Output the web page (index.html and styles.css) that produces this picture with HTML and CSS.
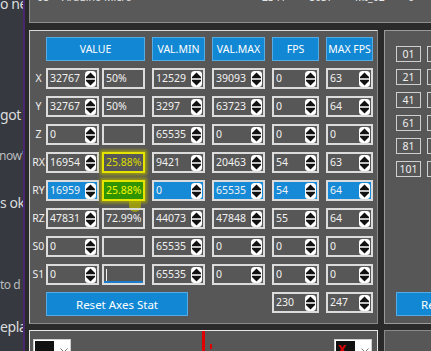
FILE: index.html
```html
<!DOCTYPE html>
<html>
<head>
<meta charset="utf-8">
<link rel="stylesheet" href="styles.css">
</head>
<body>
<svg class="defs" width="0" height="0">
  <symbol id="ud" viewBox="0 0 11 16">
    <rect x="0" y="0" width="11" height="16" rx="3.5" fill="#ffffff"/>
    <path d="M5.5 1.5 L10 6 V7.3 H1 V6 Z" fill="#111"/>
    <path d="M1 8.7 H10 V10 L5.5 14.5 L1 10 Z" fill="#111"/>
  </symbol>
</svg>
<div class="screen">
  <aside class="chat">
    <p class="m1">o ne</p>
    <p class="m2">got</p>
    <p class="m3 dim">now'</p>
    <p class="m4">s ok</p>
    <p class="m5 dim">to d</p>
    <p class="m6">epla</p>
  </aside>
  <div class="divider"></div>
  <div class="app">
    <div class="devbar">
      <span>08</span><span>Arduino Micro</span><span>2341</span><span>8037</span><span>MI_02</span><span>0</span>
    </div>
    <div class="mid">
      <section class="axes">
        <div class="row head">
          <span class="lbl"></span>
          <div class="cells">
            <div class="hdr">VALUE</div><div class="hdr">VAL.MIN</div><div class="hdr">VAL.MAX</div><div class="hdr">FPS</div><div class="hdr">MAX FPS</div>
          </div>
        </div>
        <div class="row">
          <span class="lbl">X</span>
          <div class="cells">
            <div class="pair"><div class="spin"><span>32767</span><svg class="ud"><use href="#ud"/></svg></div><div class="pct">50%</div></div>
            <div class="spin"><span>12529</span><svg class="ud"><use href="#ud"/></svg></div>
            <div class="spin"><span>39093</span><svg class="ud"><use href="#ud"/></svg></div>
            <div class="spin"><span>0</span><svg class="ud"><use href="#ud"/></svg></div>
            <div class="spin"><span>63</span><svg class="ud"><use href="#ud"/></svg></div>
          </div>
        </div>
        <div class="row">
          <span class="lbl">Y</span>
          <div class="cells">
            <div class="pair"><div class="spin"><span>32767</span><svg class="ud"><use href="#ud"/></svg></div><div class="pct">50%</div></div>
            <div class="spin"><span>3297</span><svg class="ud"><use href="#ud"/></svg></div>
            <div class="spin"><span>63723</span><svg class="ud"><use href="#ud"/></svg></div>
            <div class="spin"><span>0</span><svg class="ud"><use href="#ud"/></svg></div>
            <div class="spin"><span>64</span><svg class="ud"><use href="#ud"/></svg></div>
          </div>
        </div>
        <div class="row">
          <span class="lbl">Z</span>
          <div class="cells">
            <div class="pair"><div class="spin"><span>0</span><svg class="ud"><use href="#ud"/></svg></div><div class="pct"></div></div>
            <div class="spin"><span>65535</span><svg class="ud"><use href="#ud"/></svg></div>
            <div class="spin"><span>0</span><svg class="ud"><use href="#ud"/></svg></div>
            <div class="spin"><span>0</span><svg class="ud"><use href="#ud"/></svg></div>
            <div class="spin"><span>0</span><svg class="ud"><use href="#ud"/></svg></div>
          </div>
        </div>
        <div class="row">
          <span class="lbl">RX</span>
          <div class="cells">
            <div class="pair"><div class="spin"><span>16954</span><svg class="ud"><use href="#ud"/></svg></div><div class="pct warn">25.88%</div></div>
            <div class="spin"><span>9421</span><svg class="ud"><use href="#ud"/></svg></div>
            <div class="spin"><span>20463</span><svg class="ud"><use href="#ud"/></svg></div>
            <div class="spin"><span>54</span><svg class="ud"><use href="#ud"/></svg></div>
            <div class="spin"><span>63</span><svg class="ud"><use href="#ud"/></svg></div>
          </div>
        </div>
        <div class="row">
          <span class="lbl">RY</span>
          <div class="cells">
            <div class="pair"><div class="spin sel"><span>16959</span><svg class="ud"><use href="#ud"/></svg></div><div class="pct warn active">25.88%</div></div>
            <div class="spin sel"><span>0</span><svg class="ud"><use href="#ud"/></svg></div>
            <div class="spin sel"><span>65535</span><svg class="ud"><use href="#ud"/></svg></div>
            <div class="spin sel"><span>54</span><svg class="ud"><use href="#ud"/></svg></div>
            <div class="spin sel"><span>64</span><svg class="ud"><use href="#ud"/></svg></div>
          </div>
        </div>
        <div class="row">
          <span class="lbl">RZ</span>
          <div class="cells">
            <div class="pair"><div class="spin"><span>47831</span><svg class="ud"><use href="#ud"/></svg></div><div class="pct">72.99%</div></div>
            <div class="spin"><span>44073</span><svg class="ud"><use href="#ud"/></svg></div>
            <div class="spin"><span>47848</span><svg class="ud"><use href="#ud"/></svg></div>
            <div class="spin"><span>55</span><svg class="ud"><use href="#ud"/></svg></div>
            <div class="spin"><span>64</span><svg class="ud"><use href="#ud"/></svg></div>
          </div>
        </div>
        <div class="row">
          <span class="lbl">S0</span>
          <div class="cells">
            <div class="pair"><div class="spin"><span>0</span><svg class="ud"><use href="#ud"/></svg></div><div class="pct"></div></div>
            <div class="spin"><span>65535</span><svg class="ud"><use href="#ud"/></svg></div>
            <div class="spin"><span>0</span><svg class="ud"><use href="#ud"/></svg></div>
            <div class="spin"><span>0</span><svg class="ud"><use href="#ud"/></svg></div>
            <div class="spin"><span>0</span><svg class="ud"><use href="#ud"/></svg></div>
          </div>
        </div>
        <div class="row">
          <span class="lbl">S1</span>
          <div class="cells">
            <div class="pair"><div class="spin"><span>0</span><svg class="ud"><use href="#ud"/></svg></div><div class="pct focus"><i class="caret"></i></div></div>
            <div class="spin"><span>65535</span><svg class="ud"><use href="#ud"/></svg></div>
            <div class="spin"><span>0</span><svg class="ud"><use href="#ud"/></svg></div>
            <div class="spin"><span>0</span><svg class="ud"><use href="#ud"/></svg></div>
            <div class="spin"><span>0</span><svg class="ud"><use href="#ud"/></svg></div>
          </div>
        </div>
        <div class="row foot">
          <span class="lbl"></span>
          <div class="cells">
            <button class="btn reset">Reset Axes Stat</button>
            <div class="spin fps-total"><span>230</span><svg class="ud"><use href="#ud"/></svg></div>
            <div class="spin max-total"><span>247</span><svg class="ud"><use href="#ud"/></svg></div>
          </div>
        </div>
      </section>
      <section class="ports">
        <div class="pgrid">
          <div class="port">01</div><div class="port">02</div><div class="port">03</div>
          <div class="port">21</div><div class="port">22</div><div class="port">23</div>
          <div class="port">41</div><div class="port">42</div><div class="port">43</div>
          <div class="port">61</div><div class="port">62</div><div class="port">63</div>
          <div class="port">81</div><div class="port">82</div><div class="port">83</div>
          <div class="port">101</div><div class="port">102</div><div class="port">103</div>
        </div>
        <button class="btn reset rbtn">Reset Buttons Stat</button>
      </section>
    </div>
    <div class="bottom">
      <section class="graph">
        <div class="combo">
          <span class="swatch"><svg width="19" height="18" viewBox="0 0 19 18"><path d="M2 10.5 H17" stroke="#e8e800" stroke-width="1" stroke-dasharray="3 2"/></svg></span>
          <svg class="chev" width="8" height="5" viewBox="0 0 8 5"><path d="M0.5 0.5 L4 4 L7.5 0.5" fill="none" stroke="#777" stroke-width="1"/></svg>
        </div>
        <div class="combo">
          <span class="swatch"><b class="xmark">X</b></span>
          <svg class="chev" width="8" height="5" viewBox="0 0 8 5"><path d="M0.5 0.5 L4 4 L7.5 0.5" fill="none" stroke="#777" stroke-width="1"/></svg>
        </div>
        <i class="marker"></i>
        <i class="tick"></i>
      </section>
      <section class="graph2"></section>
    </div>
  </div>
</div>
</body>
</html>
```
FILE: styles.css
```css
* { box-sizing: border-box; margin: 0; padding: 0; }
html, body { width: 431px; height: 351px; overflow: hidden; background: #2a2a2a; }
body { font-family: "Noto Sans", "Open Sans", sans-serif; font-size: 10.5px; color: #f2f2f2; }
.defs { position: absolute; width: 0; height: 0; }

.screen { display: flex; height: 351px; overflow: hidden; }

.chat { width: 23px; flex: none; background: #36393f; overflow: hidden; white-space: nowrap;
  font-size: 14px; line-height: 20px; color: #dcddde; letter-spacing: -0.4px; }
.chat p { height: 20px; }
.chat .dim { font-size: 12px; color: #b9bbbe; letter-spacing: -0.5px; }
.m1 { margin-top: -6px; }
.m2 { margin-top: 91px; }
.m3 { margin-top: 21px; margin-left: -1px; }
.m4 { margin-top: 27px; }
.m5 { margin-top: 62px; }
.m6 { margin-top: 22px; }

.divider { width: 2px; flex: none; background: #4a2670; }

.app { flex: none; width: 406px; padding-left: 4px; display: flex; flex-direction: column; }

.devbar { width: 420px; height: 34px; margin-top: -11px; flex: none; background: #595959;
  border: 1px solid #8e8e8e; padding: 1px 0 0 7px; display: grid;
  grid-template-columns: 25px 200px 47px 46px 53px 20px; line-height: 13px; font-size: 10.5px; color: #e6e6e6; }

.mid { display: flex; gap: 6px; margin-top: 7px; height: 294px; flex: none; }

.axes { width: 349px; flex: none; background: #575757; border: 1px solid #8a8a8a;
  border-top-color: #d8d8d8; border-left-color: #c8c8c8; padding-top: 6px;
  display: flex; flex-direction: column; gap: 7px; }

.row { display: flex; height: 21px; align-items: stretch; }
.row.head, .row.foot { height: 24px; }
.lbl { width: 16px; flex: none; text-align: center; line-height: 21px; font-size: 10.5px; color: #efefef; padding-left: 1px; }
.cells { display: grid; grid-template-columns: 99px 53px 53px 47px 47px; column-gap: 7px; align-items: start; }
.pair { display: flex; gap: 3px; }
.pair .spin { width: 53px; }

.spin { height: 21px; display: flex; align-items: center; justify-content: space-between;
  border: 2px solid #dcdcdc; padding: 0 1px 0 1px; background: #575757; line-height: 17px; }
.spin span { padding-left: 1px; }
.spin.sel { background: #168ad6; }
.ud { width: 11px; height: 16px; flex: none; }

.pct { width: 43px; height: 21px; border: 2px solid #dcdcdc; padding-left: 2px; line-height: 17px; position: relative; }
.pct.warn { border-color: #e4e400; color: #dcdc00; box-shadow: 0 0 3px 2px rgba(175, 175, 0, 0.75); }
.pct.active { background: #2f9400; color: #f4f400; }
.pct.active::after { content: ""; position: absolute; left: 25px; top: 19px; width: 12px; height: 11px;
  background: rgba(175, 175, 0, 0.75); border-radius: 0 0 6px 6px; }
.pct.focus { box-shadow: inset 0 -2px 0 #1c7ccc; }
.caret { position: absolute; left: 2px; top: 3px; width: 1px; height: 12px; background: #f0f0f0; }

.hdr { height: 24px; background: #1288d4; border: 1px solid #55abe3; display: flex;
  align-items: center; justify-content: center; color: #fff; font-size: 10.5px; }

.btn { font-family: inherit; color: #fff; background: #1288d4; border: 1px solid #55abe3;
  height: 24px; font-size: 11.5px; cursor: default; white-space: nowrap; }
.reset { width: 142px; }
.rbtn { text-align: left; padding-left: 24px; flex: none; }
.foot .reset { grid-column: 1 / 3; grid-row: 1; }
.foot .fps-total { grid-column: 4; grid-row: 1; }
.foot .max-total { grid-column: 5; grid-row: 1; }

.ports { width: 160px; flex: none; background: #575757; border: 1px solid #9a9a9a;
  padding: 15px 0 7px 11px; display: flex; flex-direction: column; justify-content: space-between; align-items: flex-start; }
.pgrid { display: grid; grid-template-columns: repeat(3, 25px); column-gap: 6px; row-gap: 7px; }
.port { height: 16px; border: 1px solid #cfcfcf; text-align: center; line-height: 14px; font-size: 10.5px; color: #efefef; }

.bottom { display: flex; gap: 6px; margin-top: 6px; flex: none; height: 40px; }
.graph { width: 349px; flex: none; background: #575757; border: 1px solid #e6e6e6; position: relative;
  padding: 8px 5px 0 3px; display: flex; justify-content: space-between; align-items: flex-start; }
.graph2 { width: 160px; flex: none; background: #575757; border: 1px solid #8a8a8a; }

.combo { width: 38px; height: 22px; background: #ffffff; border: 1px solid #cfcfcf; padding: 1px;
  display: flex; align-items: center; gap: 6px; }
.swatch { width: 19px; height: 18px; background: #111; display: block; position: relative; flex: none; }
.swatch svg { display: block; }
.xmark { position: absolute; left: 2px; top: 2px; font-size: 12px; line-height: 14px; color: #e00000; font-weight: bold; }
.chev { flex: none; }

.marker { position: absolute; left: 172px; top: 0; width: 3px; height: 40px; background: #e00000; }
.tick { position: absolute; left: 180px; top: 13px; width: 2px; height: 5px; background: #e00000; }
```
